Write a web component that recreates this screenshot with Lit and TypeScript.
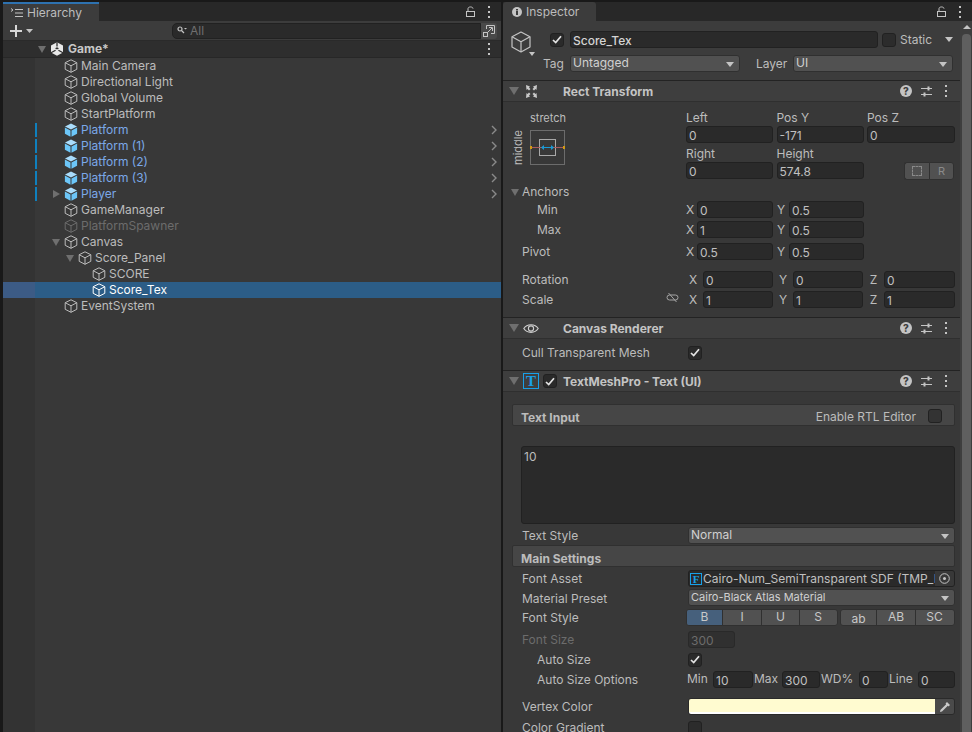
import { LitElement, css, html } from "lit";
import { customElement } from "lit/decorators.js";

interface TreeRow {
  name: string;
  depth: number;
  prefab?: boolean;
  arrow?: "down" | "right";
  off?: boolean;
  selected?: boolean;
}

const TREE: TreeRow[] = [
  { name: "Main Camera", depth: 1 },
  { name: "Directional Light", depth: 1 },
  { name: "Global Volume", depth: 1 },
  { name: "StartPlatform", depth: 1 },
  { name: "Platform", depth: 1, prefab: true },
  { name: "Platform (1)", depth: 1, prefab: true },
  { name: "Platform (2)", depth: 1, prefab: true },
  { name: "Platform (3)", depth: 1, prefab: true },
  { name: "Player", depth: 1, prefab: true, arrow: "right" },
  { name: "GameManager", depth: 1 },
  { name: "PlatformSpawner", depth: 1, off: true },
  { name: "Canvas", depth: 1, arrow: "down" },
  { name: "Score_Panel", depth: 2, arrow: "down" },
  { name: "SCORE", depth: 3 },
  { name: "Score_Tex", depth: 3, selected: true },
  { name: "EventSystem", depth: 1 },
];

// Small svg icons, all drawn in currentColor unless the icon has its own colours
const cube = html`<svg class="ico" viewBox="0 0 14 14" fill="none" stroke="currentColor" stroke-width="1" stroke-linejoin="round">
  <path d="M7 .8 12.8 3.7V10.3L7 13.3 1.2 10.3V3.7Z" /><path d="M1.2 3.7 7 6.8 12.8 3.7M7 6.8V13.3" />
</svg>`;

const prefabCube = html`<svg class="ico" viewBox="0 0 14 14">
  <path d="M7 .5 13 3.6 7 6.6 1 3.6Z" fill="#a9dcfb" />
  <path d="M.9 4.6 6.5 7.4V13.7L.9 10.8Z" fill="#6cc6f8" />
  <path d="M13.1 4.6 7.5 7.4V13.7L13.1 10.8Z" fill="#6cc6f8" />
</svg>`;

const kebab = html`<svg class="kebab" viewBox="0 0 4 12" fill="currentColor">
  <rect x="1" y="0" width="2" height="2" /><rect x="1" y="5" width="2" height="2" /><rect x="1" y="10" width="2" height="2" />
</svg>`;

const lock = html`<svg class="lock" viewBox="0 0 10 11" fill="none" stroke="currentColor" stroke-width="1">
  <rect x=".5" y="5.5" width="8" height="5" /><path d="M2 5.5V2.6C2 .4 7 .4 7 2.6" />
</svg>`;

const helpIcon = html`<span class="help">?</span>`;

const sliders = html`<svg class="sliders" viewBox="0 0 11 11" stroke="currentColor" fill="none" stroke-width="1">
  <path d="M0 2.5H11M0 8.5H11" /><path d="M7.5 .5V4.5M3.5 6.5V10.5" stroke-width="2" />
</svg>`;

const check = html`<svg class="tick" viewBox="0 0 10 9" fill="none" stroke="#e4e4e4" stroke-width="1.7">
  <path d="M1 5 3.7 7.6 9 1.2" />
</svg>`;

@customElement("app-root")
export class AppRoot extends LitElement {
  static styles = css`
    :host {
      display: block;
      width: 972px;
      height: 732px;
      overflow: hidden;
      background: #191919;
      color: #bcbcbc;
      font-family: Inter, "Liberation Sans", sans-serif;
      font-size: 12px;
      line-height: 16px;
    }
    * {
      box-sizing: border-box;
    }
    .root {
      display: flex;
      height: 732px;
      padding: 2px 0 0 3px;
      gap: 2px;
    }
    .panel {
      display: flex;
      flex-direction: column;
      min-width: 0;
    }
    .left {
      width: 498px;
    }
    .right {
      width: 469px;
    }

    /* tab strips */
    .tabs {
      display: flex;
      align-items: center;
      height: 19px;
      flex: none;
      background: #282828;
      padding-right: 10px;
    }
    .tab {
      display: flex;
      align-items: center;
      height: 19px;
      background: #3c3c3c;
      color: #bdbdbd;
      gap: 4px;
      border-radius: 3px 3px 0 0;
    }
    .tab.hier {
      width: 96px;
      padding: 1px 0 0 8px;
      border-top: 2px solid #2e72b0;
      border-radius: 0;
    }
    .tab.insp {
      width: 93px;
      padding-left: 9px;
    }
    .tabs .grow {
      flex: 1;
    }
    .lock {
      width: 10px;
      height: 11px;
      color: #c4c4c4;
    }
    .kebab {
      width: 4px;
      height: 12px;
      color: #c4c4c4;
      flex: none;
    }
    .tabs .kebab {
      margin-left: 11px;
    }

    /* hierarchy */
    .toolbar {
      display: flex;
      align-items: center;
      height: 20px;
      flex: none;
      background: #3c3c3c;
      border-bottom: 1px solid #2a2a2a;
      padding: 0 4px 0 7px;
    }
    .add {
      width: 24px;
      display: flex;
      align-items: center;
      gap: 4px;
    }
    .search {
      flex: 1;
      margin-left: 138px;
      height: 16px;
      display: flex;
      align-items: center;
      background: #2a2a2a;
      border: 1px solid #212121;
      border-radius: 5px 0 0 5px;
      padding-left: 4px;
      color: #6f6f6f;
      gap: 3px;
    }
    .maxi {
      width: 16px;
      height: 16px;
      background: #494949;
      border-radius: 0 3px 3px 0;
      display: flex;
      align-items: center;
      justify-content: center;
    }
    .scene {
      display: flex;
      align-items: center;
      height: 17px;
      flex: none;
      background: #2e2e2e;
      border-bottom: 1px solid #272727;
      padding: 0 10px 0 32px;
      font-weight: 700;
      color: #c8c8c8;
    }
    .scene .name {
      flex: 1;
      margin-left: 4px;
    }
    .scene .cell {
      width: 14px;
      display: flex;
      justify-content: center;
    }
    .scene .ico {
      margin-left: 1px;
    }
    .tree {
      flex: 1;
      background: linear-gradient(90deg, #333 32px, #383838 32px);
    }
    .row {
      position: relative;
      display: flex;
      align-items: center;
      height: 16px;
      gap: 3px;
      white-space: nowrap;
    }
    .row .cell {
      width: 14px;
      height: 16px;
      flex: none;
      margin-right: -2px;
      display: flex;
      align-items: center;
      justify-content: center;
    }
    .ico {
      width: 14px;
      height: 14px;
      flex: none;
    }
    .row.prefab {
      color: #7ba8e8;
    }
    .row.off {
      color: #6c6c6c;
    }
    .row.selected {
      background: #2c5d87;
      color: #fff;
    }
    .row.selected::before {
      content: "";
      position: absolute;
      left: 0;
      top: 0;
      bottom: 0;
      width: 32px;
      background: #3c5b85;
    }
    .row .bar {
      position: absolute;
      left: 32px;
      top: 1px;
      width: 2px;
      height: 14px;
      background: #0f80be;
    }
    .row .more {
      position: absolute;
      right: 4px;
      top: 3px;
      width: 6px;
      height: 10px;
      color: #8a8a8a;
    }
    .tri-d,
    .tri-r {
      width: 0;
      height: 0;
      flex: none;
    }
    .tri-d {
      border-left: 4px solid transparent;
      border-right: 4px solid transparent;
      border-top: 7px solid #6f6f6f;
    }
    .tri-r {
      border-top: 4px solid transparent;
      border-bottom: 4px solid transparent;
      border-left: 7px solid #6f6f6f;
    }

    /* inspector */
    .body {
      flex: 1;
      display: flex;
      min-height: 0;
    }
    .content {
      width: 457px;
      background: #383838;
      overflow: hidden;
    }
    .scroll {
      width: 12px;
      background: #3e3e3e;
      padding: 4px 1px 0 2px;
      display: flex;
      flex-direction: column;
      align-items: center;
    }
    .scroll .up {
      border-left: 4px solid transparent;
      border-right: 4px solid transparent;
      border-bottom: 4px solid #c4c4c4;
    }
    .scroll .thumb {
      margin-top: 5px;
      flex: 1;
      width: 9px;
      background: #5f5f5f;
      border-radius: 4px 4px 0 0;
    }
    .head {
      height: 60px;
      background: #3c3c3c;
      border-bottom: 1px solid #232323;
      padding: 10px 0 0 8px;
      position: relative;
    }
    .head .big {
      position: absolute;
      left: 8px;
      top: 10px;
      width: 20px;
      height: 22px;
      color: #c4c4c4;
    }
    .head .caret {
      position: absolute;
      left: 26px;
      top: 31px;
      border-left: 3.5px solid transparent;
      border-right: 3.5px solid transparent;
      border-top: 4px solid #c4c4c4;
    }
    .line1,
    .line2 {
      display: flex;
      align-items: center;
      height: 17px;
    }
    .line1 {
      padding-left: 39px;
    }
    .line2 {
      margin-top: 7px;
      padding-left: 32px;
    }
    .line1 .name {
      width: 308px;
      margin-left: 6px;
      font-weight: 500;
      color: #d4d4d4;
    }
    .line1 .static {
      margin-left: 4px;
    }
    .line1 .static-label {
      margin-left: 4px;
      width: 45px;
    }
    .line2 .tag {
      width: 27px;
    }
    .line2 .tag-dd {
      width: 170px;
    }
    .line2 .layer {
      margin-left: 16px;
      width: 37px;
    }
    .line2 .layer-dd {
      width: 160px;
    }
    .check {
      width: 14px;
      height: 14px;
      flex: none;
      background: #2a2a2a;
      border: 1px solid #212121;
      border-radius: 3px;
      display: flex;
      align-items: center;
      justify-content: center;
    }
    .check.plain {
      background: #2c2c2c;
    }
    .tick {
      width: 10px;
      height: 9px;
    }
    .sec {
      display: flex;
      align-items: center;
      height: 21px;
      background: #3e3e3e;
      border-bottom: 1px solid #2f2f2f;
      padding: 0 12px 0 6px;
      font-weight: 700;
      color: #c4c4c4;
    }
    .sec .tri-d {
      border-left-width: 5px;
      border-right-width: 5px;
      border-top-width: 8px;
    }
    .sec .glyph {
      width: 16px;
      height: 16px;
      margin-left: 4px;
      flex: none;
      display: flex;
      align-items: center;
      justify-content: center;
    }
    .sec .title {
      flex: 1;
      margin-left: 24px;
      padding-top: 1px;
    }
    .sec.tmp .title {
      margin-left: 6px;
    }
    .sec.tmp .check {
      margin-left: 4px;
    }
    .sec .tools {
      display: flex;
      align-items: center;
      gap: 9px;
    }
    .sec .tools .kebab {
      margin-left: 3px;
    }
    .help {
      width: 12px;
      height: 12px;
      border-radius: 50%;
      background: #c4c4c4;
      color: #3e3e3e;
      font-size: 10px;
      line-height: 12px;
      font-weight: 800;
      text-align: center;
    }
    .sliders {
      width: 11px;
      height: 11px;
      color: #c4c4c4;
    }
    .tboxed {
      width: 16px;
      height: 16px;
      border: 1px solid #18a0e8;
      color: #18a0e8;
      font-family: "Liberation Serif", serif;
      font-weight: 700;
      font-size: 15px;
      line-height: 14px;
      text-align: center;
    }
    .divided {
      border-bottom: 1px solid #232323;
    }

    /* fields */
    .input {
      height: 17px;
      background: #2a2a2a;
      border: 1px solid #212121;
      border-radius: 3px;
      padding: 1px 2px 0;
      line-height: 15px;
      color: #c0c0c0;
      white-space: nowrap;
      overflow: hidden;
      min-width: 0;
    }
    .dd {
      position: relative;
      height: 17px;
      background: #515151;
      border: 1px solid #303030;
      border-radius: 3px;
      padding: 0 2px;
      line-height: 14px;
      color: #d0d0d0;
    }
    .dd::after {
      content: "";
      position: absolute;
      right: 5px;
      top: 6px;
      border-left: 4px solid transparent;
      border-right: 4px solid transparent;
      border-top: 5px solid #c4c4c4;
    }
    .dd.slim {
      line-height: 15px;
      font-size: 11px;
    }

    /* rect transform */
    .rect {
      padding: 8px 3px 9px 0;
    }
    .rect-top {
      display: flex;
    }
    .anchor {
      width: 183px;
      display: grid;
      grid-template-columns: 19px 36px;
      grid-template-rows: 20px 36px;
      padding-left: 8px;
      font-size: 11px;
    }
    .anchor .st {
      grid-column: 2;
      text-align: center;
      line-height: 16px;
    }
    .anchor .mid {
      writing-mode: vertical-rl;
      transform: rotate(180deg);
      text-align: center;
      line-height: 15px;
      justify-self: start;
    }
    .anchor svg {
      width: 36px;
      height: 36px;
    }
    .pos {
      display: grid;
      grid-template-columns: 87px 87px 88px;
      grid-template-rows: 16px 17px 19px 17px;
      column-gap: 3.5px;
      flex: 1;
    }
    .pos .lbl.low {
      margin-top: 3px;
    }
    .pos .btns {
      display: flex;
      justify-content: flex-end;
      padding-right: 1px;
    }
    .seg {
      height: 18px;
      width: 25px;
      background: #515151;
      border: 1px solid #303030;
      display: flex;
      align-items: center;
      justify-content: center;
      color: #8a8a8a;
      font-size: 11px;
    }
    .seg.a {
      border-radius: 3px 0 0 3px;
      border-right: 0;
    }
    .seg.b {
      border-radius: 0 3px 3px 0;
    }
    .seg i {
      width: 10px;
      height: 10px;
      border: 1px dashed #8a8a8a;
    }
    .folded {
      display: flex;
      align-items: center;
      height: 16px;
      margin-top: 5px;
      padding-left: 8px;
      gap: 3px;
    }
    .vec {
      display: grid;
      align-items: center;
      height: 17px;
      text-align: center;
    }
    .vec.two {
      grid-template-columns: 34px 149px 11px 76px 16px 75px;
      margin-top: 3px;
    }
    .vec.three {
      grid-template-columns: 19px 161px 20px 70px 20px 70px 21px 71px;
      margin-top: 3px;
    }
    .vec > .lab {
      text-align: left;
    }
    .vec.tight {
      margin-top: 1px;
    }
    .vec.pivot {
      margin-top: 5px;
    }
    .vec.rot {
      margin-top: 11px;
    }
    .vec > .input {
      text-align: left;
    }
    .vec .sp {
      display: flex;
      justify-content: flex-end;
      padding-right: 4px;
    }
    .vec .sp .grow {
      flex: 1;
    }
    .vec.two > .lab.first {
      grid-column: 1 / 3;
      padding-left: 19px;
    }
    .vec.two > .lab.sub {
      grid-column: 1 / 3;
      padding-left: 34px;
    }
    .vec.two > .x {
      padding-right: 3px;
    }
    .unlink {
      width: 13px;
      height: 11px;
      color: #a4a4a4;
    }

    /* generic property rows */
    .prop {
      display: flex;
      align-items: center;
      height: 17px;
      padding-left: 19px;
      padding-right: 5px;
      white-space: nowrap;
    }
    .prop > .lab {
      width: 166px;
      flex: none;
      padding-top: 1px;
    }
    .prop > .lab.sub {
      padding-left: 15px;
    }
    .prop > .lab.low {
      padding-top: 3px;
    }
    .prop > .fill {
      flex: 1;
    }
    .cull {
      margin-top: 5px;
      margin-bottom: 9px;
    }
    .band {
      display: flex;
      justify-content: space-between;
      height: 22px;
      margin: 1px 5px 0 9px;
      padding: 5px 12px 0 8px;
      background: #464646;
      border: 1px solid #303030;
      border-radius: 2px;
      font-weight: 700;
    }
    .band.first {
      margin-top: 12px;
    }
    .band .rtl {
      font-weight: 400;
      display: flex;
      gap: 12px;
      margin-top: -1px;
    }
    .band .rtl .check {
      background: #333;
    }
    .area {
      height: 78px;
      margin: 20px 5px 0 18px;
      background: #2a2a2a;
      border: 1px solid #212121;
      border-radius: 3px;
      padding: 2px;
    }
    .font-field {
      display: flex;
      align-items: center;
      padding: 0 0 0 1px;
    }
    .font-field .tboxed {
      width: 12px;
      height: 12px;
      font-size: 11px;
      line-height: 10px;
      margin-right: 1px;
      flex: none;
    }
    .font-field .txt {
      flex: 1;
      overflow: hidden;
    }
    .picker {
      width: 19px;
      height: 15px;
      flex: none;
      background: #383838;
      display: flex;
      align-items: center;
      justify-content: center;
    }
    .picker svg {
      width: 11px;
      height: 11px;
    }
    .styles {
      flex: 1;
      display: flex;
      height: 17px;
      margin-left: -2px;
      gap: 2px;
    }
    .group {
      display: grid;
      border: 1px solid #303030;
      border-radius: 3px;
      overflow: hidden;
      background: #515151;
    }
    .group.a {
      grid-template-columns: 35px 39px 38px 37px;
      width: 152px;
    }
    .group.b {
      grid-template-columns: 35px 39px 38px;
      flex: 1;
    }
    .group span {
      text-align: center;
      line-height: 14px;
      border-left: 1px solid #303030;
      color: #c8c8c8;
    }
    .group span:first-child {
      border-left: 0;
    }
    .group span.on {
      background: #46607c;
    }
    .group span.low {
      line-height: 17px;
    }
    .disabled {
      color: #6c6c6c;
    }
    .input.disabled {
      width: 47px;
      background: #303030;
      border-color: #292929;
    }
    .opts {
      display: grid;
      grid-template-columns: 27px 40px 29px 38px 39px 29px 30px 37px;
      flex: 1;
      margin-left: -2px;
    }
    .opts .o {
      padding-left: 1px;
    }
    .color {
      flex: 1;
      display: flex;
      height: 17px;
      border: 1px solid #2a2a2a;
      border-radius: 3px;
      overflow: hidden;
    }
    .swatch {
      flex: 1;
      background: linear-gradient(#fffbd0 0 13px, #fff 13px);
    }
    .dropper {
      width: 19px;
      background: #4a4a4a;
      display: flex;
      align-items: center;
      justify-content: center;
    }
    .dropper svg {
      width: 12px;
      height: 12px;
    }
    .gap2 {
      margin-top: 2px;
    }
    .gap3 {
      margin-top: 3px;
    }
    .gap4 {
      margin-top: 4px;
    }
    .gap5 {
      margin-top: 5px;
    }
    .gap10 {
      margin-top: 10px;
    }
  `;

  private _treeRow(r: TreeRow) {
    const cls = `row ${r.prefab ? "prefab" : ""} ${r.off ? "off" : ""} ${r.selected ? "selected" : ""}`;
    return html`<div class=${cls} style="padding-left:${32 + 14 * r.depth}px">
      ${r.prefab ? html`<span class="bar"></span>` : ""}
      <span class="cell">
        ${r.arrow === "down" ? html`<span class="tri-d"></span>` : ""}
        ${r.arrow === "right" ? html`<span class="tri-r"></span>` : ""}
      </span>
      ${r.prefab ? prefabCube : cube}
      <span>${r.name}</span>
      ${r.prefab
        ? html`<svg class="more" viewBox="0 0 6 10" fill="none" stroke="currentColor" stroke-width="1.4"><path d="M1 1 5 5 1 9" /></svg>`
        : ""}
    </div>`;
  }

  private _hierarchy() {
    return html`<section class="panel left">
      <div class="tabs">
        <div class="tab hier">
          <svg width="12" height="10" viewBox="0 0 12 10" stroke="#c4c4c4" stroke-width="1" fill="none">
            <path d="M4 1.5H12M4 5H12M4 8.5H12M0 .5 2 2 0 3.5" />
          </svg>
          Hierarchy
        </div>
        <span class="grow"></span>
        ${lock}${kebab}
      </div>
      <div class="toolbar">
        <div class="add">
          <svg width="12" height="12" viewBox="0 0 12 12" fill="#d8d8d8"><path d="M5 0H7V5H12V7H7V12H5V7H0V5H5Z" /></svg>
          <svg width="7" height="4" viewBox="0 0 7 4" fill="#c4c4c4"><path d="M0 0H7L3.5 4Z" /></svg>
        </div>
        <div class="search">
          <svg width="10" height="9" viewBox="0 0 10 9" fill="none" stroke="#c4c4c4" stroke-width="1.2">
            <circle cx="3" cy="3" r="2" /><path d="M4.5 4.500 7 7" /><path d="M7 2H10L8.500 3.500Z" fill="#c4c4c4" stroke="none" />
          </svg>
          All
        </div>
        <div class="maxi">
          <svg width="12" height="12" viewBox="0 0 12 12" fill="none" stroke="#c4c4c4" stroke-width="1">
            <path d="M3.500 4V.5H11.500V8.500H8" /><rect x=".5" y="7.500" width="4" height="4" /><path d="M5 7 9 3M6 2.500H9.500V6" />
          </svg>
        </div>
      </div>
      <div class="scene">
        <span class="cell"><span class="tri-d"></span></span>
        <svg class="ico" viewBox="0 0 14 14">
          <path d="M7 .2 13 3.500V10.500L7 13.800 1 10.500V3.500Z" fill="#e8e8e8" />
          <path d="M7 .2V4.500M5.600 8.300 1 10.800M8.400 8.300 13 10.800" stroke="#2e2e2e" stroke-width="1.300" fill="none" />
          <path d="M7 5.200 9 6.300 7 7.500 5 6.300Z" fill="#2e2e2e" />
        </svg>
        <span class="name">Game*</span>
        ${kebab}
      </div>
      <div class="tree">${TREE.map((r) => this._treeRow(r))}</div>
    </section>`;
  }

  private _secHead(glyph: unknown, title: string, tmp = false) {
    return html`<div class="sec ${tmp ? "tmp" : ""}">
      <span class="tri-d"></span>
      <span class="glyph">${glyph}</span>
      ${tmp ? html`<span class="check">${check}</span>` : ""}
      <span class="title">${title}</span>
      <span class="tools">${helpIcon}${sliders}${kebab}</span>
    </div>`;
  }

  private _rectTransform() {
    const rectIcon = html`<svg width="13" height="13" viewBox="0 0 13 13" fill="#c8c8c8">
      <path d="M1 0 5 1.500 4 2.500 5.500 4 4 5.500 2.500 4 1.500 5Z" />
      <path d="M12 0 8 1.500 9 2.500 7.500 4 9 5.500 10.500 4 11.500 5Z" />
      <path d="M1 13 5 11.500 4 10.500 5.500 9 4 7.500 2.500 9 1.500 8Z" />
      <path d="M12 13 8 11.500 9 10.500 7.500 9 9 7.500 10.500 9 11.500 8Z" />
    </svg>`;
    return html`${this._secHead(rectIcon, "Rect Transform")}
      <div class="rect divided">
        <div class="rect-top">
          <div class="anchor">
            <span class="st">stretch</span>
            <span class="mid">middle</span>
            <svg viewBox="0 0 36 36" fill="none">
              <rect x=".5" y=".5" width="34" height="34" stroke="#6c6c6c" />
              <rect x="9.500" y="9.500" width="16" height="16" stroke="#a8a8a8" />
              <path d="M1 17.500H34" stroke="#a85c5c" />
              <path d="M12 17.500H23" stroke="#1a9ad6" />
              <path d="M11 17.500 14 15V20ZM24 17.500 21 15V20Z" fill="#1a9ad6" />
              <rect x="0" y="16" width="2" height="3" fill="#d19a12" />
              <rect x="33" y="16" width="2" height="3" fill="#d19a12" />
            </svg>
          </div>
          <div class="pos">
            <span class="lbl">Left</span><span class="lbl">Pos Y</span><span class="lbl">Pos Z</span>
            <div class="input">0</div><div class="input">-171</div><div class="input">0</div>
            <span class="lbl low">Right</span><span class="lbl low">Height</span><span></span>
            <div class="input">0</div><div class="input">574.8</div>
            <div class="btns"><span class="seg a"><i></i></span><span class="seg b">R</span></div>
          </div>
        </div>
        <div class="folded"><span class="tri-d"></span>Anchors</div>
        <div class="vec two tight">
          <span class="lab sub">Min</span><span class="x">X</span><div class="input">0</div><span>Y</span><div class="input">0.5</div>
        </div>
        <div class="vec two">
          <span class="lab sub">Max</span><span class="x">X</span><div class="input">1</div><span>Y</span><div class="input">0.5</div>
        </div>
        <div class="vec two pivot">
          <span class="lab first">Pivot</span><span class="x">X</span><div class="input">0.5</div><span>Y</span><div class="input">0.5</div>
        </div>
        <div class="vec three rot">
          <span></span><span class="lab">Rotation</span><span>X</span><div class="input">0</div><span>Y</span><div class="input">0</div><span>Z</span><div class="input">0</div>
        </div>
        <div class="vec three">
          <span></span>
          <span class="lab sp">
            <span class="grow">Scale</span>
            <svg class="unlink" viewBox="0 0 13 11" fill="none" stroke="currentColor" stroke-width="1">
              <rect x="1" y="3" width="11" height="5" rx="2.500" /><path d="M2.500 1 10.500 10" />
            </svg>
          </span>
          <span>X</span><div class="input">1</div><span>Y</span><div class="input">1</div><span>Z</span><div class="input">1</div>
        </div>
      </div>`;
  }

  private _canvasRenderer() {
    const eye = html`<svg width="16" height="11" viewBox="0 0 16 11" fill="none" stroke="#d0d0d0" stroke-width="1.100">
      <path d="M.8 5.500C4 .4 12 .4 15.200 5.500 12 10.600 4 10.600 .8 5.500Z" /><circle cx="8" cy="5.500" r="2.600" />
    </svg>`;
    return html`${this._secHead(eye, "Canvas Renderer")}
      <div class="divided">
        <div class="prop cull">
          <span class="lab">Cull Transparent Mesh</span>
          <span class="check">${check}</span>
        </div>
      </div>`;
  }

  private _tmp() {
    return html`${this._secHead(html`<span class="tboxed">T</span>`, "TextMeshPro - Text (UI)", true)}
      <div class="band first">
        <span>Text Input</span>
        <span class="rtl">Enable RTL Editor<span class="check"></span></span>
      </div>
      <div class="area">10</div>
      <div class="prop gap3">
        <span class="lab">Text Style</span>
        <div class="dd fill">Normal</div>
      </div>
      <div class="band"><span>Main Settings</span></div>
      <div class="prop gap3">
        <span class="lab">Font Asset</span>
        <div class="input fill font-field">
          <span class="tboxed">F</span>
          <span class="txt">Cairo-Num_SemiTransparent SDF (TMP_FontAsset)</span>
          <span class="picker">
            <svg viewBox="0 0 11 11" fill="none" stroke="#c4c4c4"><circle cx="5.500" cy="5.500" r="4.800" /><circle cx="5.500" cy="5.500" r="1.500" fill="#c4c4c4" stroke="none" /></svg>
          </span>
        </div>
      </div>
      <div class="prop gap2">
        <span class="lab low">Material Preset</span>
        <div class="dd slim fill">Cairo-Black Atlas Material</div>
      </div>
      <div class="prop gap3">
        <span class="lab">Font Style</span>
        <div class="styles">
          <div class="group a"><span class="on">B</span><span>I</span><span>U</span><span>S</span></div>
          <div class="group b"><span class="low">ab</span><span>AB</span><span>SC</span></div>
        </div>
      </div>
      <div class="prop gap5">
        <span class="lab disabled">Font Size</span>
        <div class="input disabled">300</div>
      </div>
      <div class="prop gap3">
        <span class="lab sub">Auto Size</span>
        <span class="check">${check}</span>
      </div>
      <div class="prop gap3">
        <span class="lab sub">Auto Size Options</span>
        <div class="opts">
          <span class="o">Min</span><div class="input">10</div>
          <span class="o">Max</span><div class="input">300</div>
          <span class="o">WD%</span><div class="input">0</div>
          <span class="o">Line</span><div class="input">0</div>
        </div>
      </div>
      <div class="prop gap10">
        <span class="lab">Vertex Color</span>
        <div class="color">
          <span class="swatch"></span>
          <span class="dropper">
            <svg viewBox="0 0 12 12" fill="#c8c8c8"><path d="M8 1 11 4 9.500 5.500 8.800 4.800 3 10.600 1 11 1.400 9 7.200 3.200 6.500 2.500Z" /></svg>
          </span>
        </div>
      </div>
      <div class="prop gap4">
        <span class="lab">Color Gradient</span>
        <span class="check plain"></span>
      </div>`;
  }

  private _inspector() {
    return html`<section class="panel right">
      <div class="tabs">
        <div class="tab insp">
          <svg width="10" height="10" viewBox="0 0 10 10">
            <circle cx="5" cy="5" r="5" fill="#c4c4c4" />
            <rect x="4" y="4" width="2" height="4" fill="#3c3c3c" /><rect x="4" y="2" width="2" height="1.500" fill="#3c3c3c" />
          </svg>
          Inspector
        </div>
        <span class="grow"></span>
        ${lock}${kebab}
      </div>
      <div class="body">
        <div class="content">
          <div class="head">
            <svg class="big" viewBox="0 0 20 22" fill="none" stroke="currentColor" stroke-width="1.200" stroke-linejoin="round">
              <path d="M10 1 19 5.800V16L10 21 1 16V5.800Z" /><path d="M1 5.800 10 10.800 19 5.800M10 10.800V21" />
            </svg>
            <span class="caret"></span>
            <div class="line1">
              <span class="check">${check}</span>
              <div class="input name">Score_Tex</div>
              <span class="check plain static"></span>
              <span class="static-label">Static</span>
              <svg width="8" height="5" viewBox="0 0 8 5" fill="#c4c4c4"><path d="M0 0H8L4 5Z" /></svg>
            </div>
            <div class="line2">
              <span class="tag">Tag</span>
              <div class="dd tag-dd">Untagged</div>
              <span class="layer">Layer</span>
              <div class="dd layer-dd">UI</div>
            </div>
          </div>
          ${this._rectTransform()} ${this._canvasRenderer()} ${this._tmp()}
        </div>
        <div class="scroll"><span class="up"></span><span class="thumb"></span></div>
      </div>
    </section>`;
  }

  render() {
    return html`<div class="root">${this._hierarchy()} ${this._inspector()}</div>`;
  }
}
